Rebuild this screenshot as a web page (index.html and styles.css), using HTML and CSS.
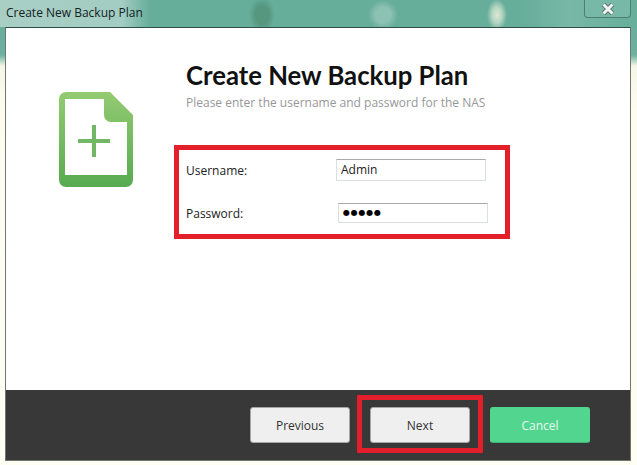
FILE: index.html
```html
<!DOCTYPE html>
<html lang="en">
<head>
    <meta charset="UTF-8">
    <meta name="viewport" content="width=device-width, initial-scale=1.0">
    <title>Create New Backup Plan</title>
    <link rel="stylesheet" href="styles.css">
</head>
<body>
    <div class="window">
        <div class="titlebar">
            <span class="titlebar-text">Create New Backup Plan</span>
            <div class="close-button">
                <svg width="14" height="12" viewBox="0 0 14 12">
                    <path d="M2.5 1.5 L11.5 10.5 M11.5 1.5 L2.5 10.5" stroke="#47665e" stroke-width="4.5" fill="none"/>
                    <path d="M2.5 1.5 L11.5 10.5 M11.5 1.5 L2.5 10.5" stroke="#f4f6f5" stroke-width="3" fill="none"/>
                </svg>
            </div>
        </div>
        <div class="dialog">
            <div class="dialog-body">
                <div class="icon-column">
                    <svg width="74" height="95" viewBox="0 0 74 95">
                        <defs>
                            <linearGradient id="fileGreen" x1="0" y1="0" x2="0" y2="1">
                                <stop offset="0" stop-color="#93cb72"/>
                                <stop offset="1" stop-color="#57aa50"/>
                            </linearGradient>
                        </defs>
                        <path fill="url(#fileGreen)" fill-rule="evenodd" d="M7 0 H51 L74 23 V88 a7 7 0 0 1 -7 7 H7 a7 7 0 0 1 -7 -7 V7 a7 7 0 0 1 7 -7 Z M6 7 V83 H68 V30 H52 a7 7 0 0 1 -7 -7 V7 Z"/>
                        <path fill="#72b764" d="M33 33 H37 V65 H33 Z M19 47 H51 V51 H19 Z"/>
                    </svg>
                </div>
                <div class="main-column">
                    <h1 class="plan-title">Create New Backup Plan</h1>
                    <p class="plan-subtitle">Please enter the username and password for the NAS</p>
                    <div class="login-box">
                        <div class="form-row">
                            <label class="form-label">Username:</label>
                            <div class="text-input">Admin</div>
                        </div>
                        <div class="form-row form-row-password">
                            <label class="form-label">Password:</label>
                            <div class="text-input password-input">●●●●●</div>
                        </div>
                    </div>
                </div>
            </div>
            <div class="footer">
                <button class="btn btn-grey">Previous</button>
                <div class="next-highlight">
                    <button class="btn btn-grey btn-next">Next</button>
                </div>
                <button class="btn btn-green">Cancel</button>
            </div>
        </div>
    </div>
</body>
</html>
```

FILE: styles.css
```css
html, body {
    margin: 0;
    padding: 0;
}
body {
    font-family: 'Open Sans', 'Noto Sans', sans-serif;
    color: #222;
}
.window {
    width: 637px;
    height: 465px;
    overflow: hidden;
    background: linear-gradient(to bottom, #66ad9a 0, #6cb09e 55px, #f6f6e6 66px, #fdfcef 110px, #fffef2 100%);
}
.titlebar {
    height: 27px;
    display: flex;
    justify-content: space-between;
    align-items: flex-start;
    background:
        radial-gradient(ellipse 13px 18px at 262px 15px, #55977f 0, #55967f 50%, rgba(85,150,127,0) 100%),
        radial-gradient(ellipse 15px 15px at 383px 15px, #8cc2b1 0, #8cc2b1 50%, rgba(140,194,177,0) 100%),
        radial-gradient(ellipse 10px 16px at 497px 15px, #dbe9cf 0, #b4d6c2 50%, rgba(180,214,194,0) 100%),
        linear-gradient(to right, #a9cfc5 0, #a3cdc2 122px, #66ad9a 150px, #66ad9a 520px, #78b8a6 570px, #66ad9a 100%);
}
.titlebar-text {
    font-size: 12px;
    line-height: 25px;
    padding-left: 6px;
    color: #14211f;
}
.close-button {
    width: 47px;
    height: 18px;
    margin-right: 6px;
    box-sizing: border-box;
    border: 1px solid #4d7f73;
    border-top: none;
    border-radius: 0 0 4px 4px;
    background: #78b8a6;
    display: flex;
    align-items: center;
    justify-content: center;
}
.dialog {
    width: 626px;
    height: 434px;
    margin-left: 5px;
    box-sizing: border-box;
    border: 1px solid #70776f;
    border-top-color: #2d4f47;
    background: #fff;
    display: flex;
    flex-direction: column;
}
.dialog-body {
    flex: 1;
    display: flex;
}
.icon-column {
    width: 53px;
    padding: 64px 0 0 53px;
}
.main-column {
    padding: 31px 0 0 74px;
}
.plan-title {
    font-family: 'Lato', 'Open Sans', sans-serif;
    font-size: 25.7px;
    line-height: 32px;
    font-weight: 700;
    color: #111;
    margin: 0;
}
.plan-subtitle {
    font-size: 12px;
    line-height: 16px;
    color: #979797;
    margin: 4px 0 0 0;
}
.login-box {
    width: 336px;
    height: 94px;
    box-sizing: border-box;
    margin: 34px 0 0 -12px;
    border: 5px solid #e21f2b;
    padding: 9px 0 0 7px;
}
.form-row {
    display: flex;
    align-items: center;
    height: 22px;
}
.form-row-password {
    margin-top: 22px;
    height: 20px;
}
.form-label {
    width: 150px;
    font-size: 12px;
}
.text-input {
    width: 150px;
    height: 100%;
    box-sizing: border-box;
    border: 1px solid #dcdfe2;
    border-top-color: #a9a9a9;
    padding-left: 4px;
    font-size: 12px;
    line-height: 20px;
}
.password-input {
    margin-left: 2px;
    font-family: 'DejaVu Sans', sans-serif;
    font-size: 8px;
    line-height: 18px;
    letter-spacing: 0.8px;
    color: #000;
}
.footer {
    height: 70px;
    background: #383838;
    display: flex;
    align-items: center;
    padding: 0 0 0 244px;
}
.btn {
    width: 100px;
    height: 36px;
    border-radius: 3px;
    font-family: 'Open Sans', 'Noto Sans', sans-serif;
    font-size: 12px;
    padding: 0;
}
.btn-grey {
    background: #efefef;
    border: 1px solid #a6a6a6;
    color: #333;
}
.btn-next {
    margin-top: 2px;
}
.btn-green {
    background: #52d68f;
    border: 1px solid #52d68f;
    border-bottom-color: #3fb376;
    color: #e9f7ef;
}
.next-highlight {
    width: 126px;
    height: 58px;
    box-sizing: border-box;
    margin: 0 7px 2px;
    border: 5px solid #e21f2b;
    display: flex;
    align-items: center;
    justify-content: center;
}
```
